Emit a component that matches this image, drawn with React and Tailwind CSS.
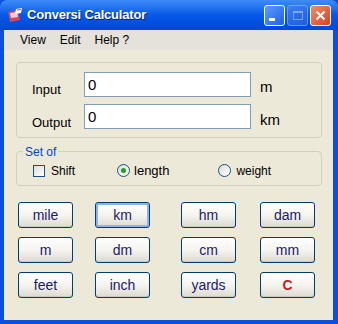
import { useState } from 'react'

const units = [
  ['mile', 'km', 'hm', 'dam'],
  ['m', 'dm', 'cm', 'mm'],
  ['feet', 'inch', 'yards', 'C'],
]

const XpButton = ({ label, focused }) => {
  const isClear = label === 'C'
  return (
    <button
      className={`w-[55px] h-[26px] rounded-[3px] border border-[#003c74] flex items-center justify-center text-[14px] bg-linear-to-b from-white via-[#f5f4ef] to-[#dcdad0] ${
        focused ? 'shadow-[inset_0_0_0_2px_#8fb2ee]' : 'shadow-[inset_0_-1px_0_#cdcac0]'
      } ${isClear ? 'text-[#cc1a1a] font-bold' : 'text-[#1b1b6a]'}`}
    >
      {label}
    </button>
  )
}

const App = () => {
  const [input, setInput] = useState('0')
  const [mode, setMode] = useState('length')

  return (
    <div className="w-[338px] h-[324px] flex flex-col bg-[#0a4fe0] font-['Liberation_Sans',Arial,sans-serif] select-none">
      {/* Title bar */}
      <div className="h-[30px] flex items-center rounded-t-[7px] bg-linear-to-b from-[#3d8cf8] via-[#0558e8] to-[#0247d6] px-[7px]">
        <svg width="16" height="15" viewBox="0 0 16 15" className="shrink-0">
          <path d="M1 4 L11 2 L13 12 L3 14 Z" fill="#d9455f" />
          <path d="M3 5 L10 4 L11 9 L4 10 Z" fill="#f7c9d2" />
          <path d="M9 1 L15 0 L14 5 L8 6 Z" fill="#ffffff" />
          <path d="M10 2 L14 1.5" stroke="#d9455f" strokeWidth="1" />
        </svg>
        <span className="ml-[4px] text-white font-bold text-[13px] tracking-[-0.2px] [text-shadow:1px_1px_0_#0a246a]">
          Conversi Calculator
        </span>
        <div className="ml-auto flex gap-[2px]">
          <div className="w-[21px] h-[21px] rounded-[3px] border border-white bg-linear-to-br from-[#5d9bff] to-[#1d5fe6] flex items-end justify-start p-[4px]">
            <div className="w-[6px] h-[3px] bg-white" />
          </div>
          <div className="w-[21px] h-[21px] rounded-[3px] border border-[#8fb3f5] bg-linear-to-br from-[#4a86f0] to-[#2a66e0] opacity-70 flex items-center justify-center">
            <div className="w-[10px] h-[9px] border border-[#a9c4f5] border-t-[2px]" />
          </div>
          <div className="w-[21px] h-[21px] rounded-[3px] border border-white bg-linear-to-br from-[#f08a6a] to-[#d6401c] flex items-center justify-center">
            <svg width="11" height="11" viewBox="0 0 11 11">
              <path d="M1.5 1.5 L9.5 9.5 M9.5 1.5 L1.5 9.5" stroke="white" strokeWidth="2" />
            </svg>
          </div>
        </div>
      </div>

      {/* Window body */}
      <div className="flex-1 ml-[4px] mr-[5px] mb-[4px] bg-[#ece9d8] flex flex-col">
        {/* Menu */}
        <div className="h-[20px] bg-[#e4e2da] flex items-center gap-[14px] pl-[16px] text-[12px] text-black">
          <span>View</span>
          <span>Edit</span>
          <span>Help ?</span>
        </div>

        {/* Input / output group */}
        <div className="mt-[12px] ml-[12px] w-[306px] h-[76px] border border-[#d0d0bf] rounded-[4px] flex flex-col gap-[7px] pt-[9px] pl-[15px]">
          <div className="h-[25px] flex items-center">
            <span className="w-[52px] text-[13px] mt-[11px]">Input</span>
            <input
              value={input}
              onChange={(e) => setInput(e.target.value)}
              className="w-[167px] h-[25px] bg-white border border-[#7f9db9] px-[3px] text-[15px] outline-none"
            />
            <span className="ml-[9px] text-[15px] mt-[5px]">m</span>
          </div>
          <div className="h-[25px] flex items-center">
            <span className="w-[52px] text-[13px] mt-[13px]">Output</span>
            <input
              value="0"
              readOnly
              className="w-[167px] h-[25px] bg-white border border-[#7f9db9] px-[3px] text-[15px] outline-none"
            />
            <span className="ml-[9px] text-[15px] mt-[7px]">km</span>
          </div>
        </div>

        {/* Set of group */}
        <div className="relative mt-[13px] ml-[12px] w-[306px] h-[35px] border border-[#d0d0bf] rounded-[4px] flex items-center pt-[4px] text-[12px]">
          <span className="absolute -top-[9px] left-[6px] px-[2px] bg-[#ece9d8] text-[#0046d5] text-[12px]">
            Set of
          </span>
          <label className="flex items-center ml-[16px]">
            <span className="w-[12px] h-[12px] border border-[#1c5180] bg-linear-to-br from-[#dcdcd7] to-white" />
            <span className="ml-[6px]">Shift</span>
          </label>
          <label className="flex items-center ml-[42px]" onClick={() => setMode('length')}>
            <span className="w-[13px] h-[13px] rounded-full border border-[#1c5180] bg-linear-to-br from-[#dcdcd7] to-white flex items-center justify-center">
              {mode === 'length' && <span className="w-[5px] h-[5px] rounded-full bg-[#21a121]" />}
            </span>
            <span className="ml-[4px] text-[13px]">length</span>
          </label>
          <label className="flex items-center ml-[49px]" onClick={() => setMode('weight')}>
            <span className="w-[13px] h-[13px] rounded-full border border-[#1c5180] bg-linear-to-br from-[#dcdcd7] to-white flex items-center justify-center">
              {mode === 'weight' && <span className="w-[5px] h-[5px] rounded-full bg-[#21a121]" />}
            </span>
            <span className="ml-[5px]">weight</span>
          </label>
        </div>

        {/* Unit buttons */}
        <div className="mt-[16px] ml-[14px] flex flex-col gap-[9px]">
          {units.map((row, i) => (
            <div key={i} className="flex">
              <XpButton label={row[0]} />
              <div className="ml-[22px]"><XpButton label={row[1]} focused={row[1] === 'km'} /></div>
              <div className="ml-[31px]"><XpButton label={row[2]} /></div>
              <div className="ml-[24px]"><XpButton label={row[3]} /></div>
            </div>
          ))}
        </div>
      </div>
    </div>
  )
}

export default App
